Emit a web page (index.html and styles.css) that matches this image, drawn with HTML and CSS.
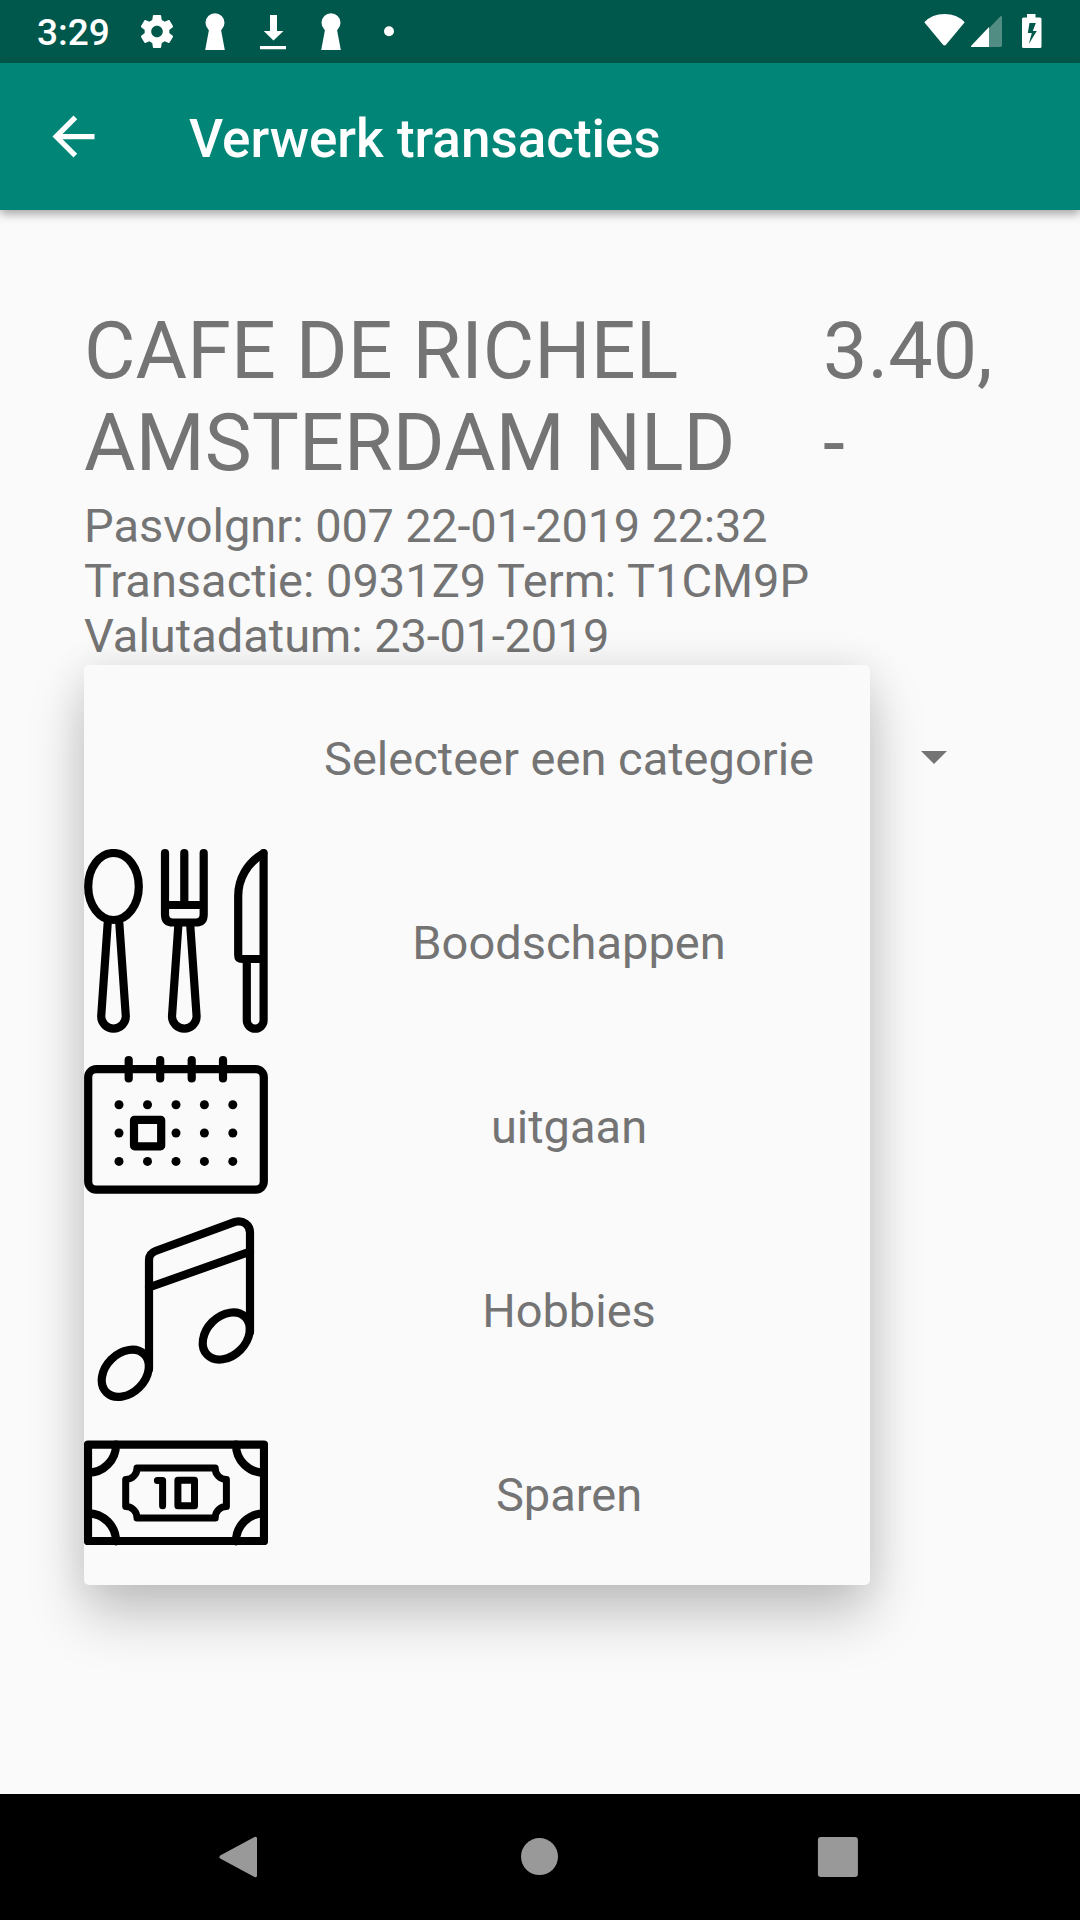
FILE: index.html
```html
<!DOCTYPE html>
<html lang="nl">
<head>
<meta charset="utf-8">
<title>Verwerk transacties</title>
<link rel="stylesheet" href="styles.css">
</head>
<body>
<div class="screen">
  <header class="status-bar">
    <span class="clock">3:29</span>
    <div class="notifications">
      <svg viewBox="0 0 58 63"><path transform="translate(9.2 11.7) scale(1.65)" d="M19.43 12.98c.04-.32.07-.64.07-.98s-.03-.66-.07-.98l2.11-1.65c.19-.15.24-.42.12-.64l-2-3.46c-.12-.22-.39-.3-.61-.22l-2.49 1c-.52-.4-1.08-.73-1.69-.98l-.38-2.65C14.46 2.18 14.25 2 14 2h-4c-.25 0-.46.18-.49.42l-.38 2.65c-.61.25-1.17.59-1.69.98l-2.49-1c-.23-.09-.49 0-.61.22l-2 3.46c-.13.22-.07.49.12.64l2.11 1.65c-.04.32-.07.65-.07.98s.03.66.07.98l-2.11 1.65c-.19.15-.24.42-.12.64l2 3.46c.12.22.39.3.61.22l2.49-1c.52.4 1.08.73 1.69.98l.38 2.65c.03.24.24.42.49.42h4c.25 0 .46-.18.49-.42l.38-2.65c.61-.25 1.17-.59 1.69-.98l2.49 1c.23.09.49 0 .61-.22l2-3.46c.12-.22.07-.49-.12-.64l-2.11-1.65zM12 15.5c-1.93 0-3.5-1.57-3.5-3.5s1.57-3.5 3.5-3.5 3.5 1.57 3.5 3.5-1.57 3.5-3.5 3.5z"/></svg>
      <svg viewBox="0 0 58 63"><circle cx="29" cy="22.7" r="9.5"/><path d="M23.3 28H34.7L38.8 50H19.2z"/></svg>
      <svg viewBox="0 0 58 63"><path d="M26 15h7v16h6.5L29.5 40.5 19.7 31H26zM16 46h26v3.3H16z"/></svg>
      <svg viewBox="0 0 58 63"><circle cx="29" cy="22.7" r="9.5"/><path d="M23.3 28H34.7L38.8 50H19.2z"/></svg>
      <svg viewBox="0 0 58 63"><circle cx="29" cy="31.2" r="5"/></svg>
    </div>
    <svg class="system-icons" viewBox="0 0 120 63">
      <path d="M4.3 22.2Q12 14 24.5 14T44.7 22.2L26 44.8Q24.5 46.4 23 44.8z"/>
      <path d="M51 46.8 80.5 16.3Q82 15.2 82 17V45.6Q82 47 80.5 47H52Q50.6 47 51 46.8z" opacity=".32"/>
      <path d="M51 46 69 27V47H52Q50.4 47 51 46z"/>
      <path fill-rule="evenodd" d="M107 14h8.5v3.5H120q1.5 0 1.5 1.5v27.5q0 1.5-1.5 1.5h-16.5q-1.5 0-1.5-1.5V19q0-1.5 1.5-1.5H107zM109.5 23l-1.700 10h4l-3 11 8-13h-4l3-8z"/>
    </svg>
  </header>

  <div class="app-bar">
    <svg class="back" viewBox="0 0 24 24"><path d="M20 11H7.83l5.59-5.59L12 4l-8 8 8 8 1.41-1.41L7.83 13H20z"/></svg>
    <h1 class="title">Verwerk transacties</h1>
  </div>

  <main class="content">
    <div class="summary">
      <h2 class="payee">CAFE DE RICHEL<br>AMSTERDAM NLD</h2>
      <div class="amount">3.40,<br>-</div>
    </div>
    <p class="details">Pasvolgnr: <span class="figures">007 22-01-2019 22:32</span><br>Transactie: 0931Z9 Term: T1CM9P<br>Valutadatum: <span class="figures">23-01-2019</span></p>

    <div class="spinner">
      <svg class="caret" viewBox="0 0 26 13"><path d="M0 0h26L13 13z"/></svg>
      <ul class="dropdown">
        <li class="option">
          <span class="icon"></span>
          <span class="label">Selecteer een categorie</span>
        </li>
        <li class="option">
          <svg class="icon" viewBox="0 0 184 184">
            <ellipse cx="29.5" cy="37.5" rx="25.3" ry="33.5"/>
            <path d="M23.7 74 17.2 167.3A12.3 12.3 0 0 0 41.8 167.3L35.3 74"/>
            <path d="M81 4.2V65.5Q81 73.5 89 73.5H111.7Q119.7 73.5 119.7 65.5V4.2M100.3 4.2V56M81 56H119.7"/>
            <path d="M94.5 74 88 167.3A12.3 12.3 0 0 0 112.6 167.3L106.1 74"/>
            <path d="M179.6 4.2C163 14 154.2 30 154.2 47V106Q154.2 110 158.2 110H179.6M179.6 4.2V171.300A8.4 8.4 0 0 1 162.8 171.3V110"/>
          </svg>
          <span class="label">Boodschappen</span>
        </li>
        <li class="option">
          <svg class="icon" viewBox="0 0 184 184">
            <rect x="4.2" y="36.2" width="175.6" height="120.4" rx="8"/>
            <path d="M44.7 27V45.5M76.2 27V45.5M107.7 27V45.5M139 27V45.5"/>
            <rect x="50" y="86.8" width="27.2" height="26.5" rx=".5"/>
            <g class="dots">
              <circle cx="35" cy="71.7" r="4.5"/><circle cx="63.5" cy="71.7" r="4.5"/><circle cx="92" cy="71.7" r="4.5"/><circle cx="120.4" cy="71.7" r="4.5"/><circle cx="148.8" cy="71.7" r="4.5"/>
              <circle cx="35" cy="100" r="4.5"/><circle cx="92" cy="100" r="4.5"/><circle cx="120.4" cy="100" r="4.5"/><circle cx="148.8" cy="100" r="4.5"/>
              <circle cx="35" cy="128.4" r="4.5"/><circle cx="63.5" cy="128.4" r="4.5"/><circle cx="92" cy="128.4" r="4.5"/><circle cx="120.4" cy="128.4" r="4.5"/><circle cx="148.8" cy="128.4" r="4.5"/>
            </g>
          </svg>
          <span class="label">uitgaan</span>
        </li>
        <li class="option">
          <svg class="icon" viewBox="0 0 184 184">
            <path d="M65 152V43Q65 36.5 71.5 34L151 4.9C159 2.5 166 8 166 15.5V115M65 70.3 166 34.7"/>
            <ellipse cx="41.3" cy="156.3" rx="26.8" ry="19.8" transform="rotate(-45 41.3 156.3)"/>
            <ellipse cx="142.3" cy="119" rx="26.8" ry="19.8" transform="rotate(-45 142.3 119)"/>
          </svg>
          <span class="label">Hobbies</span>
        </li>
        <li class="option">
          <svg class="icon" viewBox="0 0 184 184">
            <rect x="4" y="43.7" width="176" height="96.3"/>
            <path d="M32 43.7A28 28 0 0 1 4 71.7M152 43.7A28 28 0 0 0 180 71.7M4 112.3A28 28 0 0 1 32 140.3M180 112.3A28 28 0 0 0 152 140.3"/>
            <g class="fine">
              <path d="M53 67H131.2A11.2 11.2 0 0 0 142.4 78.5V105.5A11.2 11.2 0 0 0 131.2 117H53A11.2 11.2 0 0 0 41.7 105.5V78.5A11.2 11.2 0 0 0 53 67z"/>
              <path d="M73.4 79.5H78.6V104.8"/>
              <rect x="93.9" y="79.3" width="16.6" height="25.5"/>
            </g>
          </svg>
          <span class="label">Sparen</span>
        </li>
      </ul>
    </div>
  </main>

  <nav class="nav-bar">
    <svg viewBox="0 0 60 60"><path d="M11.2 28.5 45.5 10Q48 9 48 11.5V48.5Q48 51 45.5 50L11.2 31.5Q9.6 30 11.2 28.5z"/></svg>
    <svg viewBox="0 0 60 60"><circle cx="30.5" cy="29.6" r="18.5"/></svg>
    <svg viewBox="0 0 60 60"><rect x="9.9" y="10" width="40" height="40" rx="3"/></svg>
  </nav>
</div>
</body>
</html>
```
FILE: styles.css
```css
* {
  box-sizing: border-box;
  margin: 0;
  padding: 0;
}

body {
  font-family: Roboto, "Liberation Sans", sans-serif;
  background: #fafafa;
}

.screen {
  display: flex;
  flex-direction: column;
  width: 1080px;
  height: 1920px;
  overflow: hidden;
  color: #747474;
}

.status-bar {
  display: flex;
  align-items: center;
  height: 63px;
  padding-left: 37px;
  padding-right: 40px;
  background: #00574b;
  color: #fff;
  fill: #fff;
}

.clock {
  width: 91px;
  font-size: 37px;
  font-weight: 500;
  line-height: 43px;
  padding-top: 1px;
}

.notifications {
  display: flex;
}

.notifications svg {
  width: 58px;
  height: 63px;
}

.system-icons {
  width: 120px;
  height: 63px;
  margin-left: auto;
  overflow: visible;
}

.app-bar {
  display: flex;
  align-items: center;
  gap: 84px;
  height: 147px;
  padding-left: 42px;
  background: #008577;
  color: #fff;
  box-shadow: 0 4px 9px rgba(0, 0, 0, .34);
}

.back {
  width: 63px;
  height: 63px;
  fill: #fff;
}

.title {
  font-size: 53px;
  font-weight: 500;
  line-height: 62px;
  padding-top: 4px;
}

.content {
  flex: 1;
  padding: 95px 84px 0;
}

.summary {
  display: flex;
  justify-content: space-between;
  font-size: 79px;
  line-height: 92px;
}

.payee {
  font-size: inherit;
  font-weight: 400;
  letter-spacing: .12px;
}

.amount {
  width: 173px;
}

.details {
  margin-top: 9px;
  font-size: 47px;
  line-height: 55px;
}

.figures {
  letter-spacing: -.24px;
}

.spinner {
  position: relative;
  display: flex;
  align-items: center;
  justify-content: flex-end;
  height: 184px;
  margin-top: 2px;
  padding-right: 49px;
}

.caret {
  width: 26px;
  height: 13px;
  fill: #747474;
}

/* Open list, laid over the spinner and the page below it */
.dropdown {
  position: absolute;
  top: 0;
  left: 0;
  width: 786px;
  list-style: none;
  border-radius: 5px;
  background: #fafafa;
  box-shadow: 0 30px 56px rgba(0, 0, 0, .22), 0 0 40px rgba(0, 0, 0, .08);
}

.option {
  display: flex;
  align-items: center;
  height: 184px;
}

.icon {
  width: 184px;
  height: 184px;
  fill: none;
  stroke: #000;
  stroke-width: 8.2px;
  stroke-linecap: round;
  stroke-linejoin: round;
}

.fine {
  stroke-width: 7px;
}

.dots {
  fill: #000;
  stroke: none;
}

.label {
  flex: 1;
  padding-top: 3px;
  font-size: 47px;
  line-height: 56px;
  text-align: center;
}

.nav-bar {
  display: flex;
  justify-content: space-between;
  align-items: center;
  height: 126px;
  padding: 0 212px 0 209px;
  background: #000;
}

.nav-bar svg {
  width: 60px;
  height: 60px;
  fill: #999;
}
```
